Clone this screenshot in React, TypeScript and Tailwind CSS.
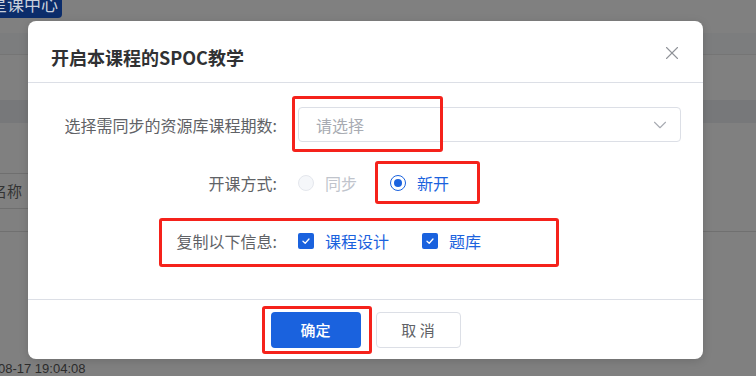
import { X, ChevronDown } from 'lucide-react'

function Radio({ label, checked, disabled }: { label: string; checked?: boolean; disabled?: boolean }) {
  return (
    <div className="flex items-center">
      {checked ? (
        <span className="w-[16px] h-[16px] rounded-full border border-[#1a62de] flex items-center justify-center">
          <span className="w-[8px] h-[8px] rounded-full bg-[#1a62de]" />
        </span>
      ) : (
        <span className={`w-[16px] h-[16px] rounded-full border ${disabled ? 'border-[#e4e7ed] bg-[#f5f7fa]' : 'border-[#dcdfe6] bg-white'}`} />
      )}
      <span className={`ml-[11px] ${disabled ? 'text-[#c0c4cc]' : checked ? 'text-[#1a62de]' : 'text-[#606266]'}`}>{label}</span>
    </div>
  )
}

function Checkbox({ label }: { label: string }) {
  return (
    <div className="flex items-center">
      <span className="w-[16px] h-[16px] rounded-[2px] bg-[#1a62de] flex items-center justify-center">
        <svg width="10" height="8" viewBox="0 0 10 8" fill="none">
          <path d="M2 4.2 L4.2 6.2 L8 2" stroke="white" strokeWidth="1.3" strokeLinecap="round" strokeLinejoin="round" />
        </svg>
      </span>
      <span className="ml-[11px] text-[#1a62de]">{label}</span>
    </div>
  )
}

export default function App() {
  return (
    <div
      className="relative w-[756px] h-[376px] overflow-hidden bg-[#808080]"
      style={{ fontFamily: '"Noto Sans CJK SC", "Liberation Sans", sans-serif' }}
    >
      {/* page behind the overlay */}
      <div className="h-[18px] w-[62px] bg-[#0c2d6b] rounded-br-[4px] overflow-hidden">
        <div className="ml-[-10px] mt-[-7px] text-[17px] leading-[22px] text-[#c9d0dc] whitespace-nowrap">星课中心</div>
      </div>
      <div className="mt-[15px] h-[22px] bg-[#7c7d7e] border-b border-[#757575]" />
      <div className="mt-[45px] h-[23px] bg-[#77787a]" />
      <div className="mt-[50px] h-[36px] w-[40px] border-t border-b border-[#6f6f6f] flex items-center">
        <span className="ml-[-8px] text-[15px] text-[#333]">名称</span>
      </div>
      <div className="mt-[22px] border-t border-[#707070]" />
      <div className="mt-[130px] text-[13px] leading-[14px] text-[#2c2c2c] ml-[-2px]" style={{ fontFamily: '"Liberation Sans", sans-serif' }}>
        08-17 19:04:08
      </div>

      {/* dialog */}
      <div className="absolute left-[28px] top-[21px] w-[675px] h-[338px] bg-white rounded-[8px] shadow-[0_2px_10px_rgba(0,0,0,0.15)] flex flex-col">
        <div className="h-[62px] px-[23px] pt-[24px] border-b border-[#dcdfe6] flex justify-between items-start">
          <h2 className="text-[18px] font-bold leading-[24px] text-[#303133]">开启本课程的SPOC教学</h2>
          <X className="w-[22px] h-[22px] mt-[-3px] mr-[-3px] text-[#909399]" strokeWidth={1.2} />
        </div>

        <div className="flex-1 pt-[24px] pr-[22px] flex flex-col gap-[23px] text-[16px]">
          <div className="flex items-center h-[35px]">
            <label className="w-[270px] pr-[21px] text-right text-[#606266]">选择需同步的资源库课程期数:</label>
            <div className="flex-1 h-[35px] border border-[#dcdfe6] rounded-[4px] flex items-center justify-between pl-[17px] pr-[9px]">
              <span className="text-[#a8abb2]">请选择</span>
              <ChevronDown className="w-[22px] h-[22px] text-[#a8abb2]" strokeWidth={1.2} />
            </div>
          </div>

          <div className="flex items-center h-[35px]">
            <label className="w-[270px] pr-[21px] text-right text-[#606266]">开课方式:</label>
            <div className="flex items-center gap-[33px]">
              <Radio label="同步" disabled />
              <Radio label="新开" checked />
            </div>
          </div>

          <div className="flex items-center h-[35px]">
            <label className="w-[270px] pr-[21px] text-right text-[#606266]">复制以下信息:</label>
            <div className="flex items-center gap-[33px]">
              <Checkbox label="课程设计" />
              <Checkbox label="题库" />
            </div>
          </div>
        </div>

        <div className="h-[60px] border-t border-[#dcdfe6] pt-[12px] flex justify-center gap-[15px] text-[15px]">
          <button className="w-[90px] h-[36px] rounded-[4px] bg-[#1a62de] text-white font-medium">确定</button>
          <button className="w-[85px] h-[36px] rounded-[4px] border border-[#dcdfe6] text-[#606266]">取 消</button>
        </div>
      </div>

      {/* annotations */}
      <div className="absolute left-[292px] top-[96px] w-[151px] h-[56px] border-[3px] border-[#f5221b] rounded-[3px]" />
      <div className="absolute left-[375px] top-[161px] w-[105px] h-[43px] border-[3px] border-[#f5221b] rounded-[3px]" />
      <div className="absolute left-[159px] top-[218px] w-[400px] h-[49px] border-[3px] border-[#f5221b] rounded-[3px]" />
      <div className="absolute left-[262px] top-[306px] w-[110px] h-[48px] border-[3px] border-[#f5221b] rounded-[3px]" />
    </div>
  )
}
